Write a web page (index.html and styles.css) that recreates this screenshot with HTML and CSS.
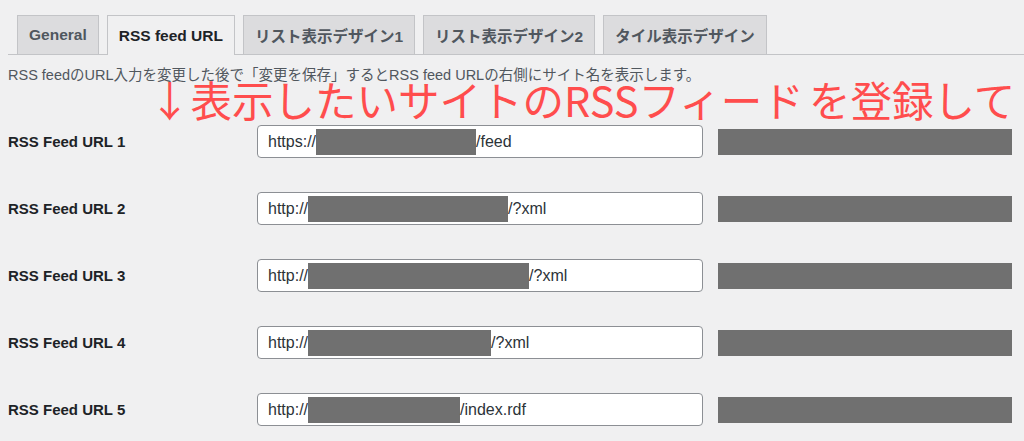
FILE: index.html
```html
<!DOCTYPE html>
<html lang="ja">
<head>
    <meta charset="UTF-8">
    <meta name="viewport" content="width=device-width, initial-scale=1.0">
    <title>RSS feed URL</title>
    <link rel="stylesheet" href="styles.css">
</head>
<body>
    <div class="page">
        <!-- Settings tabs -->
        <nav class="tabs">
            <a class="tab">General</a>
            <a class="tab active">RSS feed URL</a>
            <a class="tab">リスト表示デザイン1</a>
            <a class="tab">リスト表示デザイン2</a>
            <a class="tab">タイル表示デザイン</a>
        </nav>

        <p class="desc">RSS feedのURL入力を変更した後で「変更を保存」するとRSS feed URLの右側にサイト名を表示します。</p>

        <!-- Annotation written over the screenshot -->
        <div class="note">↓表示したいサイトのRSSフィード を登録して</div>

        <!-- Feed URL rows -->
        <div class="feeds">
            <div class="label">RSS Feed URL 1</div>
            <div class="field"><span>https://</span><span class="hide w1"></span><span>/feed</span></div>
            <div class="site"></div>

            <div class="label">RSS Feed URL 2</div>
            <div class="field"><span>http://</span><span class="hide w2"></span><span>/?xml</span></div>
            <div class="site"></div>

            <div class="label">RSS Feed URL 3</div>
            <div class="field"><span>http://</span><span class="hide w3"></span><span>/?xml</span></div>
            <div class="site"></div>

            <div class="label">RSS Feed URL 4</div>
            <div class="field"><span>http://</span><span class="hide w4"></span><span>/?xml</span></div>
            <div class="site"></div>

            <div class="label">RSS Feed URL 5</div>
            <div class="field"><span>http://</span><span class="hide w5"></span><span>/index.rdf</span></div>
            <div class="site"></div>
        </div>
    </div>
</body>
</html>
```

FILE: styles.css
```css
/* General Styles */
body {
    margin: 0;
    background: #f0f0f1;
    font-family: "Liberation Sans", "Noto Sans CJK JP", sans-serif;
    color: #1d2327;
}

.page {
    position: relative;
    height: 441px;
    overflow: hidden;
}

/* Tabs */
.tabs {
    display: flex;
    align-items: flex-end;
    gap: 8px;
    margin: 15px 0 0 8px;
    padding-left: 9px;
    border-bottom: 1px solid #c3c4c7;
    height: 39px;
}

.tab {
    box-sizing: border-box;
    height: 39px;
    padding: 0 11px;
    display: flex;
    align-items: center;
    background: #dcdcde;
    border: 1px solid #c3c4c7;
    border-bottom: none;
    color: #50575e;
    font-size: 15.5px;
    font-weight: bold;
    white-space: nowrap;
}

.tab.active {
    background: #f0f0f1;
    color: #1d2327;
    height: 40px;
    margin-bottom: -1px;
}

.desc {
    margin: 11px 0 0 8px;
    font-size: 14.5px;
    line-height: 18px;
    color: #50575e;
}

/* Red annotation */
.note {
    position: absolute;
    top: 84px;
    left: 149px;
    font-family: "Noto Sans CJK JP", sans-serif;
    font-size: 41.5px;
    line-height: 0.76;
    word-spacing: -4px;
    color: #ff4d4d;
    white-space: nowrap;
}

/* Feed rows */
.feeds {
    display: grid;
    grid-template-columns: 249px 446px 309px;
    grid-auto-rows: 67px;
    align-items: center;
    margin: 24px 0 0 8px;
}

.label {
    font-size: 15px;
    font-weight: bold;
    color: #1d2327;
}

.field {
    box-sizing: border-box;
    height: 33px;
    padding: 0 10px;
    display: flex;
    align-items: center;
    background: #fff;
    border: 1px solid #8c8f94;
    border-radius: 4px;
    font-size: 16px;
    color: #2c3338;
    white-space: nowrap;
}

.hide {
    display: inline-block;
    height: 26px;
    background: #707070;
}

.w1 { width: 160px; }
.w2 { width: 200px; }
.w3 { width: 221px; }
.w4 { width: 183px; }
.w5 { width: 152px; }

.site {
    height: 26px;
    margin-left: 15px;
    width: 294px;
    background: #707070;
}
```
